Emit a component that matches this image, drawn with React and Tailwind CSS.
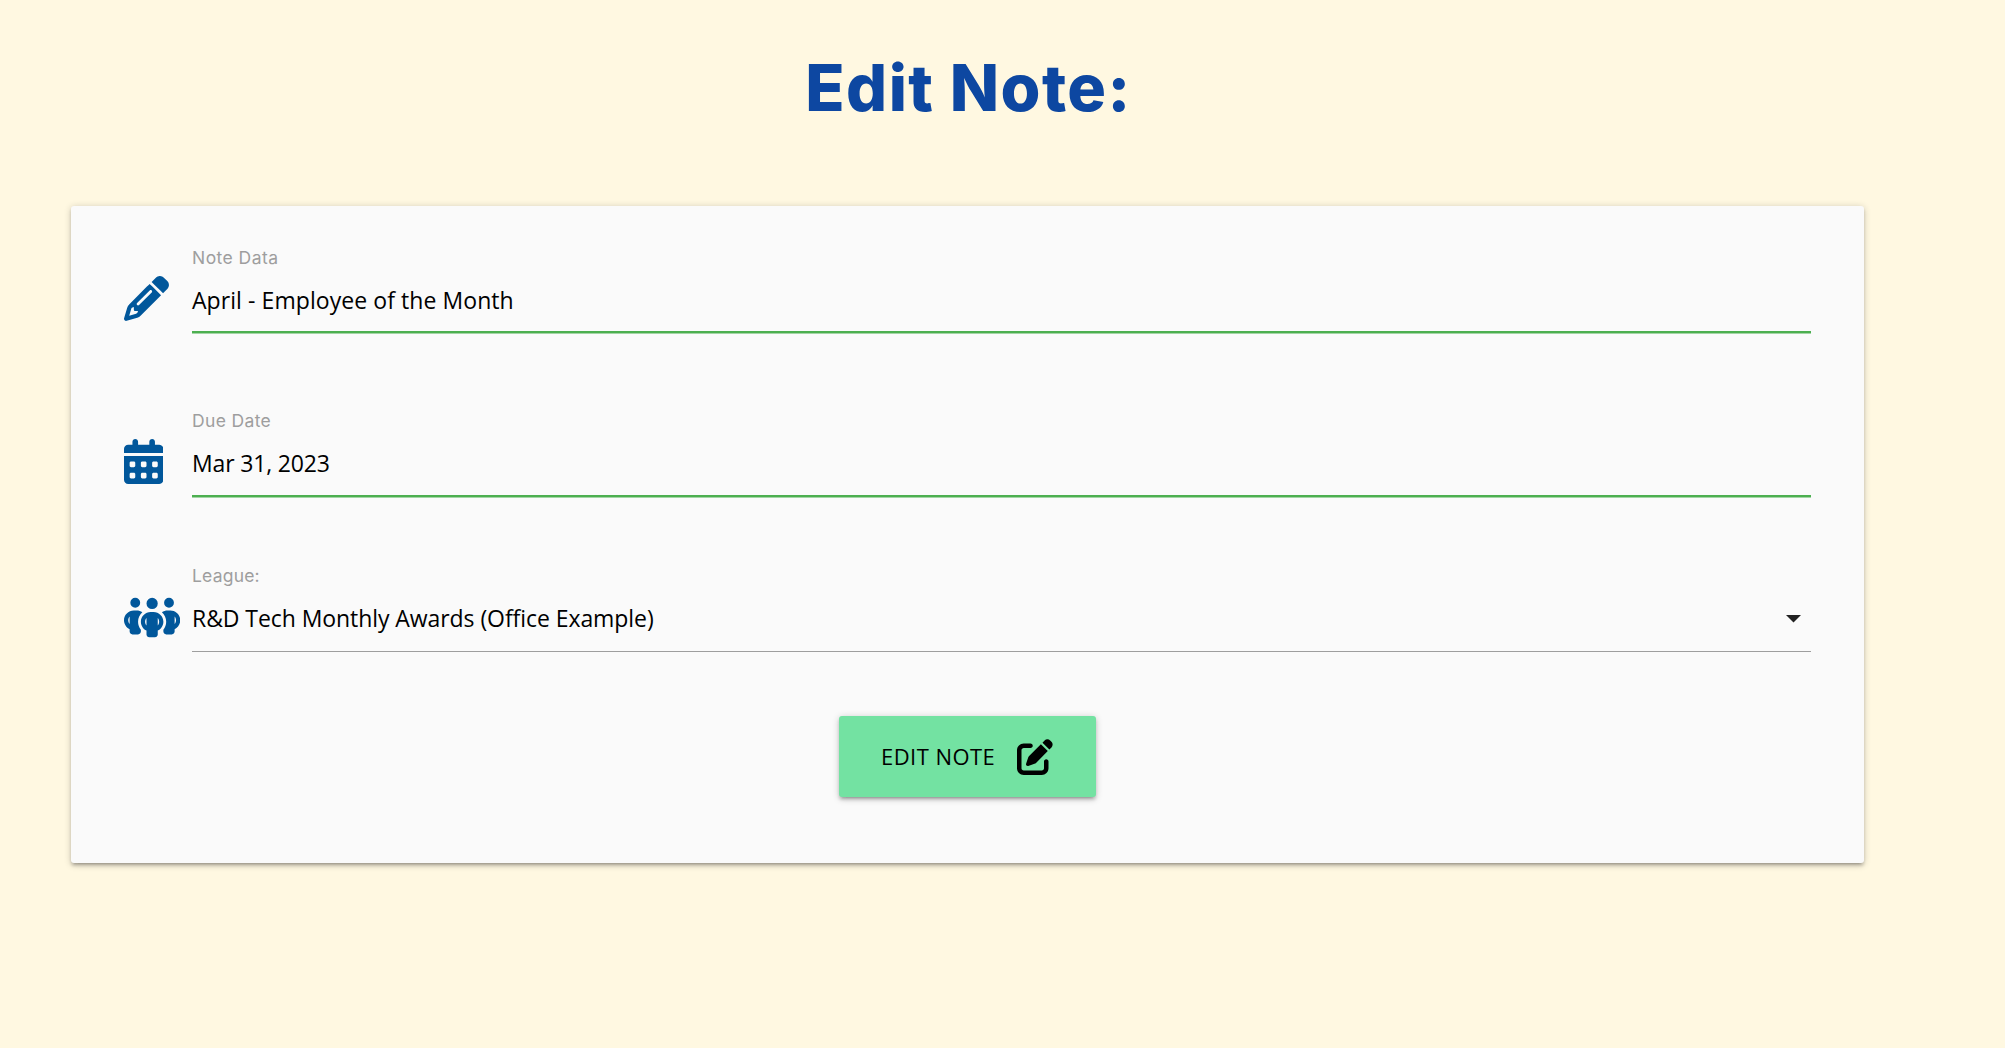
import { FaPencil, FaCalendarDays, FaPeopleGroup, FaPenToSquare } from "react-icons/fa6";

function Field({ icon, iconTop, label, labelStyle, value, valueStyle, line, height, arrow }) {
  return (
    <div className={`flex ${height}`}>
      <div className={`w-[68px] shrink-0 text-[#01579b] ${iconTop}`}>{icon}</div>
      <div className="flex-1">
        <div className={`h-6 whitespace-nowrap font-['Inter'] text-[17.5px] leading-6 text-[#9e9e9e] ${labelStyle}`}>{label}</div>
        <div className={`flex items-center justify-between whitespace-nowrap ${line}`}>
          <span className={`font-['Open_Sans'] text-[23px] text-black ${valueStyle}`}>{value}</span>
          {arrow && (
            <svg className="mr-[10px] h-[8px] w-[15px]" viewBox="0 0 15 8">
              <path d="M0 0h15L7.5 7.5z" fill="#212121" />
            </svg>
          )}
        </div>
      </div>
    </div>
  );
}

export default function App() {
  return (
    <div className="h-[1048px] w-[2005px] overflow-hidden bg-[#fff8e1] pl-[71px]">
      <div className="w-[1793px]">
        <h1 className="pl-[2px] pt-[46px] text-center font-['Inter'] text-[64.5px] font-extrabold leading-[84px] tracking-[1.4px] text-[#0d47a1]">Edit Note:</h1>
        <main className="mt-[76px] h-[657px] rounded-[3px] bg-[#fafafa] px-[53px] pt-[40px] shadow-[0_3px_3px_0_rgba(0,0,0,0.14),0_4.5px_1.5px_-3px_rgba(0,0,0,0.12),0_1.5px_7.5px_0_rgba(0,0,0,0.2)]">
          <Field
            height="h-[163px]"
            iconTop="pt-[30px]"
            icon={<FaPencil className="h-[45px] w-[45px]" />}
            label="Note Data"
            labelStyle="tracking-[0.45px]"
            value="April - Employee of the Month"
            valueStyle="tracking-[0.07px]"
            line="h-[63px] border-b-2 border-[#4caf50] shadow-[0_1px_0_0_rgba(76,175,80,0.5)]"
          />
          <Field
            height="h-[155px]"
            iconTop="pt-[30px]"
            icon={<FaCalendarDays className="h-[45px] w-[39.4px]" />}
            label="Due Date"
            labelStyle="tracking-[0.35px]"
            value="Mar 31, 2023"
            valueStyle="tracking-[-0.15px]"
            line="h-[64px] border-b-2 border-[#4caf50] pb-px shadow-[0_1px_0_0_rgba(76,175,80,0.5)]"
          />
          <Field
            height="h-[152px]"
            iconTop="pt-[31px]"
            icon={<FaPeopleGroup className="h-[45px] w-[56.25px]" />}
            label="League:"
            labelStyle="tracking-[0.2px]"
            value="R&D Tech Monthly Awards (Office Example)"
            valueStyle="tracking-[-0.07px]"
            line="h-[64px] border-b border-[#9e9e9e] pb-[2px]"
            arrow
          />
          <button className="mx-auto flex h-[81px] w-[257px] items-center rounded-[3px] bg-[#73e2a2] pl-[42px] text-black shadow-[0_3px_3px_0_rgba(0,0,0,0.14),0_4.5px_1.5px_-3px_rgba(0,0,0,0.12),0_1.5px_7.5px_0_rgba(0,0,0,0.2)]">
            <span className="w-[136px] whitespace-nowrap text-left font-['Open_Sans'] text-[22px] tracking-[0.45px]">EDIT NOTE</span>
            <FaPenToSquare size={36} />
          </button>
        </main>
      </div>
    </div>
  );
}
